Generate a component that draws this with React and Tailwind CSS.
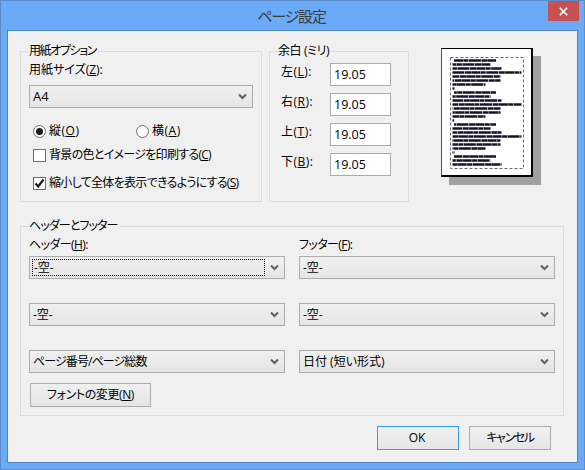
import { X } from 'lucide-react';

const Key = ({ children }) => <span className="underline underline-offset-1">{children}</span>;

function Chevron() {
  return (
    <svg width="9" height="7" viewBox="0 0 9 7" className="shrink-0">
      <path d="M1 1.5 L4.5 5 L8 1.5" fill="none" stroke="#606060" strokeWidth="2" />
    </svg>
  );
}

function Combo({ value, focused, className = '' }) {
  return (
    <div className={`flex h-[23px] items-center justify-between border border-[#acacac] bg-gradient-to-b from-[#f0f0f0] to-[#e5e5e5] pl-[3px] pr-[5px] ${className}`}>
      {focused ? (
        <span className="flex h-[17px] w-[233px] items-center border border-dotted border-black pl-px -ml-px">{value}</span>
      ) : (
        <span>{value}</span>
      )}
      <Chevron />
    </div>
  );
}

function Group({ title, className = '', children }) {
  return (
    <div className={`relative border border-[#dcdcdc] ${className}`}>
      <span className="absolute -top-[9px] left-[8px] bg-[#f0f0f0] pr-[2px] leading-[16px]">{title}</span>
      {children}
    </div>
  );
}

function Radio({ checked, children, className = '' }) {
  return (
    <div className={`flex h-4 items-center gap-[3px] ${className}`}>
      <span className="flex h-[13px] w-[13px] items-center justify-center rounded-full border border-[#707070] bg-white">
        {checked && <span className="h-[7px] w-[7px] rounded-full bg-[#1c1c1c]" />}
      </span>
      <span className="tracking-[0.5px]">{children}</span>
    </div>
  );
}

function Check({ checked, children, className = '' }) {
  return (
    <div className={`flex h-4 items-center gap-[3px] ${className}`}>
      <span className="flex h-[13px] w-[13px] items-center justify-center border border-[#707070] bg-white">
        {checked && (
          <svg width="11" height="11" viewBox="0 0 11 11">
            <path d="M1.5 5.5 L4.2 8.5 L9.5 1.5" fill="none" stroke="#1c1c1c" strokeWidth="2.2" />
          </svg>
        )}
      </span>
      <span className="tracking-[-0.7px]">{children}</span>
    </div>
  );
}

function MarginRow({ label, k }) {
  return (
    <div className="flex h-[23px] items-start">
      <span className="w-[49px] leading-[18px] tracking-[0.5px]">{label}(<Key>{k}</Key>):</span>
      <div className="flex h-[23px] w-[61px] items-center border border-[#acacac] bg-white pl-[3px] text-[12.5px]">19.05</div>
    </div>
  );
}

const BLOCK = [42, 38, 49, 69, 48, 48, 33, 2];

// tiny page preview, just a drawing of greeked text lines
function PagePreview() {
  const lines = [];
  [0, 32, 64, 96].forEach((top, p) => {
    BLOCK.slice(0, p === 3 ? 3 : 8).forEach((w, i) => {
      lines.push({ y: top + i * 4 + 2.5, x: i === 0 ? 3 : 1.5, w });
    });
  });
  return (
    <div className="ml-8 h-[129px] w-[92px] border-t border-l border-t-black border-l-[#555] border-r-2 border-b-2 border-r-black border-b-black bg-white shadow-[8px_8px_0_#a0a0a0]">
      <svg width="89" height="126" viewBox="0 0 89 126" className="block">
        <rect x="8.5" y="8.5" width="73" height="111" fill="none" stroke="#6a6a6a" strokeDasharray="3 2" />
        <g transform="translate(9 9)">
          {lines.map((l, i) => (
            <line key={i} x1={l.x} x2={l.x + l.w} y1={l.y} y2={l.y} stroke="#14142a" strokeWidth="2.4" strokeDasharray="9 .4 5 .5 12 .6 6 .3" strokeDashoffset={i * 5} />
          ))}
        </g>
      </svg>
    </div>
  );
}

export default function App() {
  return (
    <div className="h-[470px] w-[585px] border border-[#5a8ccb] bg-[#6aaaf6] px-[6px] pb-[6px] text-[12px] leading-4 text-black [font-family:'Open_Sans','Noto_Sans_CJK_JP',sans-serif] [font-feature-settings:'palt']">
      {/* title bar */}
      <div className="relative flex h-[29px] items-center justify-center">
        <span className="pr-[2px] text-[15px] tracking-[-1.2px] text-[#3c3c3c]">ページ設定</span>
        <div className="absolute -right-[1px] top-0 flex h-[20px] w-[31px] items-center justify-center bg-[#c75050]">
          <X size={13} strokeWidth={3.2} className="text-white" />
        </div>
      </div>

      <div className="h-[433px] border border-[#4f84c4] bg-[#f0f0f0] pl-3">
        {/* top row */}
        <div className="flex items-start pt-[17px]">
          <Group title={<span className="tracking-[-1.4px]">用紙オプション</span>} className="mt-[3px] h-[151px] w-[242px] pl-2 pt-[10px]">
            <div>用紙サイズ(<Key>Z</Key>):</div>
            <Combo value={<span className="text-[13px]">A4</span>} className="mt-[7px] w-[224px]" />
            <div className="ml-1 mt-[15px] flex">
              <Radio checked className="w-[103px]">縦(<Key>O</Key>)</Radio>
              <Radio>横(<Key>A</Key>)</Radio>
            </div>
            <Check className="ml-1 mt-2">背景の色とイメージを印刷する(<Key>C</Key>)</Check>
            <Check checked className="ml-1 mt-3">縮小して全体を表示できるようにする(<Key>S</Key>)</Check>
          </Group>

          <Group title={<span className="tracking-[-0.4px]">余白 (ミリ)</span>} className="ml-[7px] mt-[3px] flex h-[151px] w-[140px] flex-col gap-[7px] pl-[11px] pt-[11px]">
            <MarginRow label="左" k="L" />
            <MarginRow label="右" k="R" />
            <MarginRow label="上" k="T" />
            <MarginRow label="下" k="B" />
          </Group>

          <PagePreview />
        </div>

        {/* header / footer */}
        <Group title={<span className="tracking-[-0.9px]">ヘッダーとフッター</span>} className="mt-6 h-[190px] w-[544px] pl-2 pt-[10px]">
          <div className="grid w-[526px] grid-cols-[256px_256px] gap-x-[14px]">
            <div className="tracking-[-0.6px]">ヘッダー(<Key>H</Key>):</div>
            <div className="tracking-[-0.6px]">フッター(<Key>F</Key>):</div>
          </div>
          <div className="mt-[3px] grid w-[526px] grid-cols-[256px_256px] gap-x-[14px] gap-y-6">
            <Combo value="-空-" focused />
            <Combo value="-空-" />
            <Combo value="-空-" />
            <Combo value="-空-" />
            <Combo value={<span className="tracking-[-0.9px]">ページ番号/ページ総数</span>} />
            <Combo value="日付 (短い形式)" />
          </div>
          <button className="ml-px mt-[10px] h-6 w-[121px] border border-[#acacac] bg-gradient-to-b from-[#f0f0f0] to-[#e5e5e5] tracking-[-0.4px]">
            フォントの変更(<Key>N</Key>)
          </button>
        </Group>

        {/* ok / cancel */}
        <div className="mt-[10px] flex justify-end gap-[10px] pr-[26px]">
          <button className="h-6 w-[82px] border border-[#3399ff] bg-gradient-to-b from-[#f0f0f0] to-[#e5e5e5] pr-[2px]">OK</button>
          <button className="h-6 w-[82px] border border-[#acacac] bg-gradient-to-b from-[#f0f0f0] to-[#e5e5e5] tracking-[-1.4px]">キャンセル</button>
        </div>
      </div>
    </div>
  );
}
